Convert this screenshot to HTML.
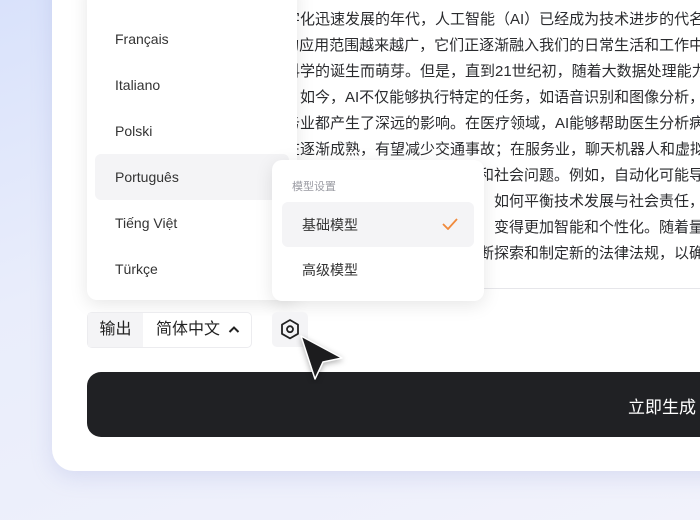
<!DOCTYPE html>
<html><head><meta charset="utf-8"><style>
*{margin:0;padding:0;box-sizing:border-box}
body{width:700px;height:520px;overflow:hidden;position:relative;font-family:"Liberation Sans","Noto Sans CJK SC",sans-serif;background:linear-gradient(160deg,#d9e2fb 0%,#e9edfb 40%,#f1f2fb 100%)}
.card{position:absolute;left:52px;top:-40px;width:700px;height:511px;background:#fff;border-radius:22px;box-shadow:0 6px 20px rgba(150,160,220,.25)}
.txt{position:absolute;left:270px;top:7px;width:430px;font-size:15px;line-height:26px;color:#2a2b2e;white-space:nowrap;overflow:hidden}
.txt2{position:absolute;right:-4px;top:163px;width:400px;font-size:15px;line-height:26px;color:#2a2b2e;white-space:nowrap;text-align:right}
.div{position:absolute;left:480px;top:288px;width:220px;height:1px;background:#e6e6ea}
.lang{position:absolute;left:87px;top:-20px;width:210px;height:320px;background:#fff;border-radius:10px;box-shadow:0 4px 18px rgba(0,0,0,.1)}
.lang div{position:absolute;left:8px;width:194px;height:46px;line-height:46px;padding-left:20px;font-size:14px;color:#333}
.model{position:absolute;left:272px;top:160px;width:212px;height:141px;background:#fff;border-radius:10px;box-shadow:0 4px 18px rgba(0,0,0,.1)}
.out{position:absolute;left:87px;top:312px;width:165px;height:36px;border:1px solid #ececef;border-radius:5px;background:#fff;font-size:16px;color:#222}
.btn{position:absolute;left:87px;top:372px;width:660px;height:65px;background:#202124;border-radius:14px;color:#fff;font-size:17px}
</style></head><body>
<div class="card"></div>
<div class="txt">数字化迅速发展的年代，人工智能（AI）已经成为技术进步的代名词<br>AI的应用范围越来越广，它们正逐渐融入我们的日常生活和工作中<br>算科学的诞生而萌芽。但是，直到21世纪初，随着大数据处理能力的<br>展。如今，AI不仅能够执行特定的任务，如语音识别和图像分析，<br>服务业都产生了深远的影响。在医疗领域，AI能够帮助医生分析病例<br>正在逐渐成熟，有望减少交通事故；在服务业，聊天机器人和虚拟</div>
<div class="txt2">伦理和社会问题。例如，自动化可能导<br>同时，如何平衡技术发展与社会责任，<br>发展，变得更加智能和个性化。随着量<br>不断探索和制定新的法律法规，以确</div>
<div class="div"></div>
<div class="lang">
<div style="top:36px">Français</div>
<div style="top:82px">Italiano</div>
<div style="top:128px">Polski</div>
<div style="top:174px;background:#f4f4f6;border-radius:6px">Português</div>
<div style="top:220px">Tiếng Việt</div>
<div style="top:266px">Türkçe</div>
</div>
<div class="model">
<div style="position:absolute;left:20px;top:18px;font-size:11px;color:#9a9ba3">模型设置</div>
<div style="position:absolute;left:10px;top:42px;width:192px;height:45px;background:#f4f4f6;border-radius:6px"></div>
<div style="position:absolute;left:30px;top:55px;font-size:14px;color:#333">基础模型</div>
<svg style="position:absolute;left:170px;top:58px" width="16" height="12" viewBox="0 0 16 12"><path d="M1 6l5 5 9-10" fill="none" stroke="#f08a3c" stroke-width="1.8"/></svg>
<div style="position:absolute;left:30px;top:100px;font-size:14px;color:#333">高级模型</div>
</div>
<div class="out">
<div style="position:absolute;left:0;top:0;width:55px;height:34px;background:#f4f4f6;line-height:34px;text-align:center">输出</div>
<div style="position:absolute;left:68px;top:0;line-height:34px">简体中文</div>
<svg style="position:absolute;left:140px;top:12px" width="12" height="9" viewBox="0 0 12 9"><path d="M1.5 7l4.5-4.5 4.5 4.5" fill="none" stroke="#222" stroke-width="2"/></svg>
</div>
<div style="position:absolute;left:272px;top:312px;width:36px;height:35px;background:#f4f4f6;border-radius:5px"></div>
<svg style="position:absolute;left:279px;top:318px" width="22" height="24" viewBox="0 0 22 24"><path d="M11 2l8 4.6v9.2L11 20.4 3 15.8V6.6z" fill="none" stroke="#222" stroke-width="1.8" stroke-linejoin="round"/><circle cx="11" cy="11.2" r="3" fill="none" stroke="#222" stroke-width="1.8"/></svg>
<div class="btn"><span style="position:absolute;left:541px;top:21px">立即生成</span></div>
<svg style="position:absolute;left:296px;top:332px" width="52" height="52" viewBox="0 0 52 52"><path d="M5 4L46 26 27 30 19 47z" fill="#1c1c1e" stroke="#fff" stroke-width="1.5" stroke-linejoin="round" style="filter:drop-shadow(0 2px 3px rgba(0,0,0,.3))"/></svg>
</body></html>
